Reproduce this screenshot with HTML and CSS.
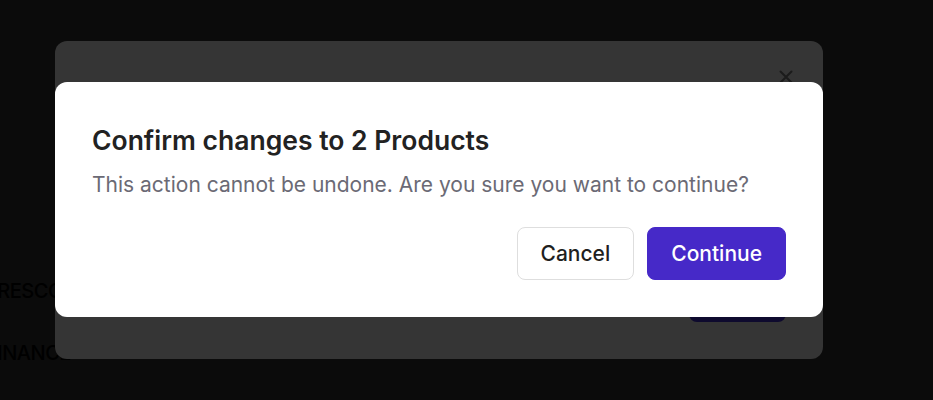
FILE: index.html
```html
<!DOCTYPE html>
<html lang="en">
<head>
<meta charset="utf-8">
<title>Confirm changes</title>
<link rel="stylesheet" href="styles.css">
</head>
<body>
  <div class="page">
    <div class="page-row">FRESCO</div>
    <div class="page-row">FINANCE</div>
  </div>

  <div class="layer">
    <div class="panel">
      <div class="panel-head">
        <svg class="close" width="14" height="14" viewBox="0 0 14 14" aria-hidden="true">
          <path d="M1.5 1.5 L12.5 12.5 M12.5 1.5 L1.5 12.5" stroke="#1b1b1b" stroke-width="2" stroke-linecap="round" fill="none"/>
        </svg>
      </div>
      <div class="panel-foot">
        <span class="panel-btn"></span>
      </div>
    </div>
  </div>

  <div class="layer layer-top">
    <div class="dialog" role="dialog">
      <h2 class="dialog-title">Confirm changes to 2 Products</h2>
      <p class="dialog-text">This action cannot be undone. Are you sure you want to continue?</p>
      <div class="dialog-actions">
        <button class="btn btn-secondary">Cancel</button>
        <button class="btn btn-primary">Continue</button>
      </div>
    </div>
  </div>
</body>
</html>
```

FILE: styles.css
```css
html, body {
  margin: 0;
  padding: 0;
  height: 100%;
}

body {
  background: #0b0b0b;
  font-family: Inter, "Noto Sans", sans-serif;
  overflow: hidden;
  position: relative;
}

.page {
  padding-top: 279px;
  margin-left: -14px;
  display: flex;
  flex-direction: column;
  gap: 38px;
}

.page-row {
  font-size: 20px;
  font-weight: 500;
  color: #000;
  line-height: 24px;
  letter-spacing: -0.5px;
}

.layer {
  position: absolute;
  top: 0;
  left: 0;
  right: 0;
  bottom: 0;
  padding: 41px 0 0 55px;
}

.layer-top {
  padding-top: 82px;
}

.panel {
  width: 768px;
  height: 318px;
  background: #353535;
  border-radius: 12px;
  display: flex;
  flex-direction: column;
  justify-content: space-between;
  box-sizing: border-box;
  padding: 29px 37px 37px 37px;
}

.panel-head {
  display: flex;
  justify-content: flex-end;
}

.close {
  display: block;
  margin-right: -7px;
}

.panel-foot {
  display: flex;
  justify-content: flex-end;
}

.panel-btn {
  display: block;
  width: 97px;
  height: 40px;
  border-radius: 8px;
  background: #0e0a2e;
}

.dialog {
  width: 768px;
  height: 235px;
  box-sizing: border-box;
  background: #ffffff;
  border-radius: 12px;
  padding: 42px 37px 37px 37px;
  display: flex;
  flex-direction: column;
}

.dialog-title {
  margin: 0;
  font-size: 26.5px;
  line-height: 32px;
  font-weight: 600;
  color: #222222;
}

.dialog-text {
  margin: 15px 0 0 0;
  font-size: 21px;
  line-height: 28px;
  color: #6b6a75;
  font-weight: 400;
}

.dialog-actions {
  margin-top: auto;
  display: flex;
  justify-content: flex-end;
  gap: 13px;
}

.btn {
  font-family: Inter, "Noto Sans", sans-serif;
  font-size: 21px;
  font-weight: 500;
  height: 53px;
  padding: 0 23px;
  border-radius: 8px;
  cursor: pointer;
  box-sizing: border-box;
}

.btn-secondary {
  background: #ffffff;
  color: #1f1f1f;
  border: 1px solid #dedede;
}

.btn-primary {
  background: #4629c8;
  color: #ffffff;
  border: 1px solid #4629c8;
}
```
